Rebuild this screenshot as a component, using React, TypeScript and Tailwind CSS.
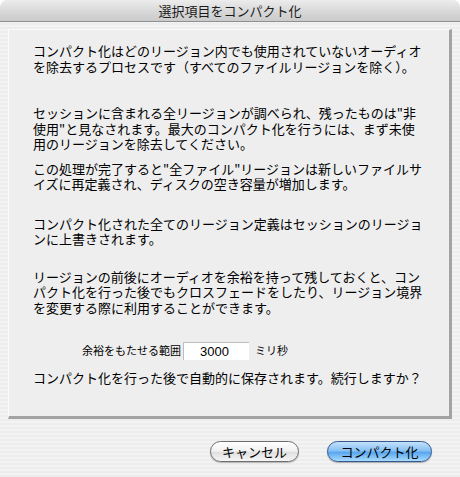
import React from "react";

const jp = "font-['Lucida_Grande','Noto_Sans_CJK_JP',sans-serif]";

const Para = ({ lines, className }: { lines: string[]; className?: string }) => (
  <div className={"whitespace-nowrap text-[13px] leading-[15.5px] text-black " + (className ?? "")}>
    {lines.map((l, i) => (
      <div key={i}>{l}</div>
    ))}
  </div>
);

export default function App() {
  return (
    <div
      className={
        "w-[460px] h-[477px] flex flex-col overflow-hidden rounded-t-[7px] bg-[repeating-linear-gradient(0deg,#ededed_0px,#ededed_2px,#f3f3f3_2px,#f3f3f3_4px)] " +
        jp
      }
    >
      {/* title bar */}
      <div className="h-[22px] shrink-0 flex items-center justify-center bg-[linear-gradient(#ececec,#d6d6d6_60%,#cbcbcb)] border-b border-[#8f8f8f] rounded-t-[7px]">
        <span className="text-[13px] leading-none text-[#1a1a1a]">選択項目をコンパクト化</span>
      </div>

      <div className="px-[8px] pt-[7px]">
        <div className="h-[390px] bg-[#eeeeee] border-l border-t border-[#fbfbfb] border-r-[3px] border-b-[3px] border-r-[#a3a3a3] border-b-[#a3a3a3] pt-[13px] pl-[24px]">
          <Para
            lines={[
              "コンパクト化はどのリージョン内でも使用されていないオーディオ",
              "を除去するプロセスです（すべてのファイルリージョンを除く）。",
            ]}
          />
          <Para
            className="mt-[31px]"
            lines={[
              "セッションに含まれる全リージョンが調べられ、残ったものは\"非",
              "使用\"と見なされます。最大のコンパクト化を行うには、まず未使",
              "用のリージョンを除去してください。",
            ]}
          />
          <Para
            className="mt-[9px]"
            lines={[
              "この処理が完了すると\"全ファイル\"リージョンは新しいファイルサ",
              "イズに再定義され、ディスクの空き容量が増加します。",
            ]}
          />
          <Para
            className="mt-[24px]"
            lines={[
              "コンパクト化された全てのリージョン定義はセッションのリージョ",
              "ンに上書きされます。",
            ]}
          />
          <Para
            className="mt-[22px]"
            lines={[
              "リージョンの前後にオーディオを余裕を持って残しておくと、コン",
              "パクト化を行った後でもクロスフェードをしたり、リージョン境界",
              "を変更する際に利用することができます。",
            ]}
          />
          <div className="mt-[27px] h-[18px] flex items-center pl-[49px] text-[11px] text-black whitespace-nowrap">
            <span className="mb-[2px]">余裕をもたせる範囲</span>
            <div className="ml-[2px] w-[66px] h-[18px] bg-white border-t border-l border-[#bdbdbd] flex items-center pl-[16px] text-[13px] font-['Liberation_Sans',sans-serif]">
              3000
            </div>
            <span className="ml-[6px] mb-[2px]">ミリ秒</span>
          </div>
          <Para
            className="mt-[10px]"
            lines={["コンパクト化を行った後で自動的に保存されます。続行しますか？"]}
          />
        </div>
      </div>

      <div className="flex justify-end gap-[28px] pr-[28px] pt-[22px]">
        <button className="w-[89px] h-[21px] rounded-full border border-[#6e6e6e] bg-[linear-gradient(#ffffff,#f2f2f2_45%,#e0e0e0_55%,#f6f6f6)] shadow-[0_1px_1px_rgba(0,0,0,0.25)] text-[13px] leading-none text-black flex items-center justify-center">
          キャンセル
        </button>
        <button className="w-[105px] h-[21px] rounded-full border border-[#34578f] bg-[linear-gradient(#c3e1fb,#88c1f3_45%,#5aa7ee_55%,#a9dcff)] shadow-[0_1px_1px_rgba(0,0,0,0.3)] text-[13px] leading-none text-black flex items-center justify-center">
          コンパクト化
        </button>
      </div>
    </div>
  );
}
